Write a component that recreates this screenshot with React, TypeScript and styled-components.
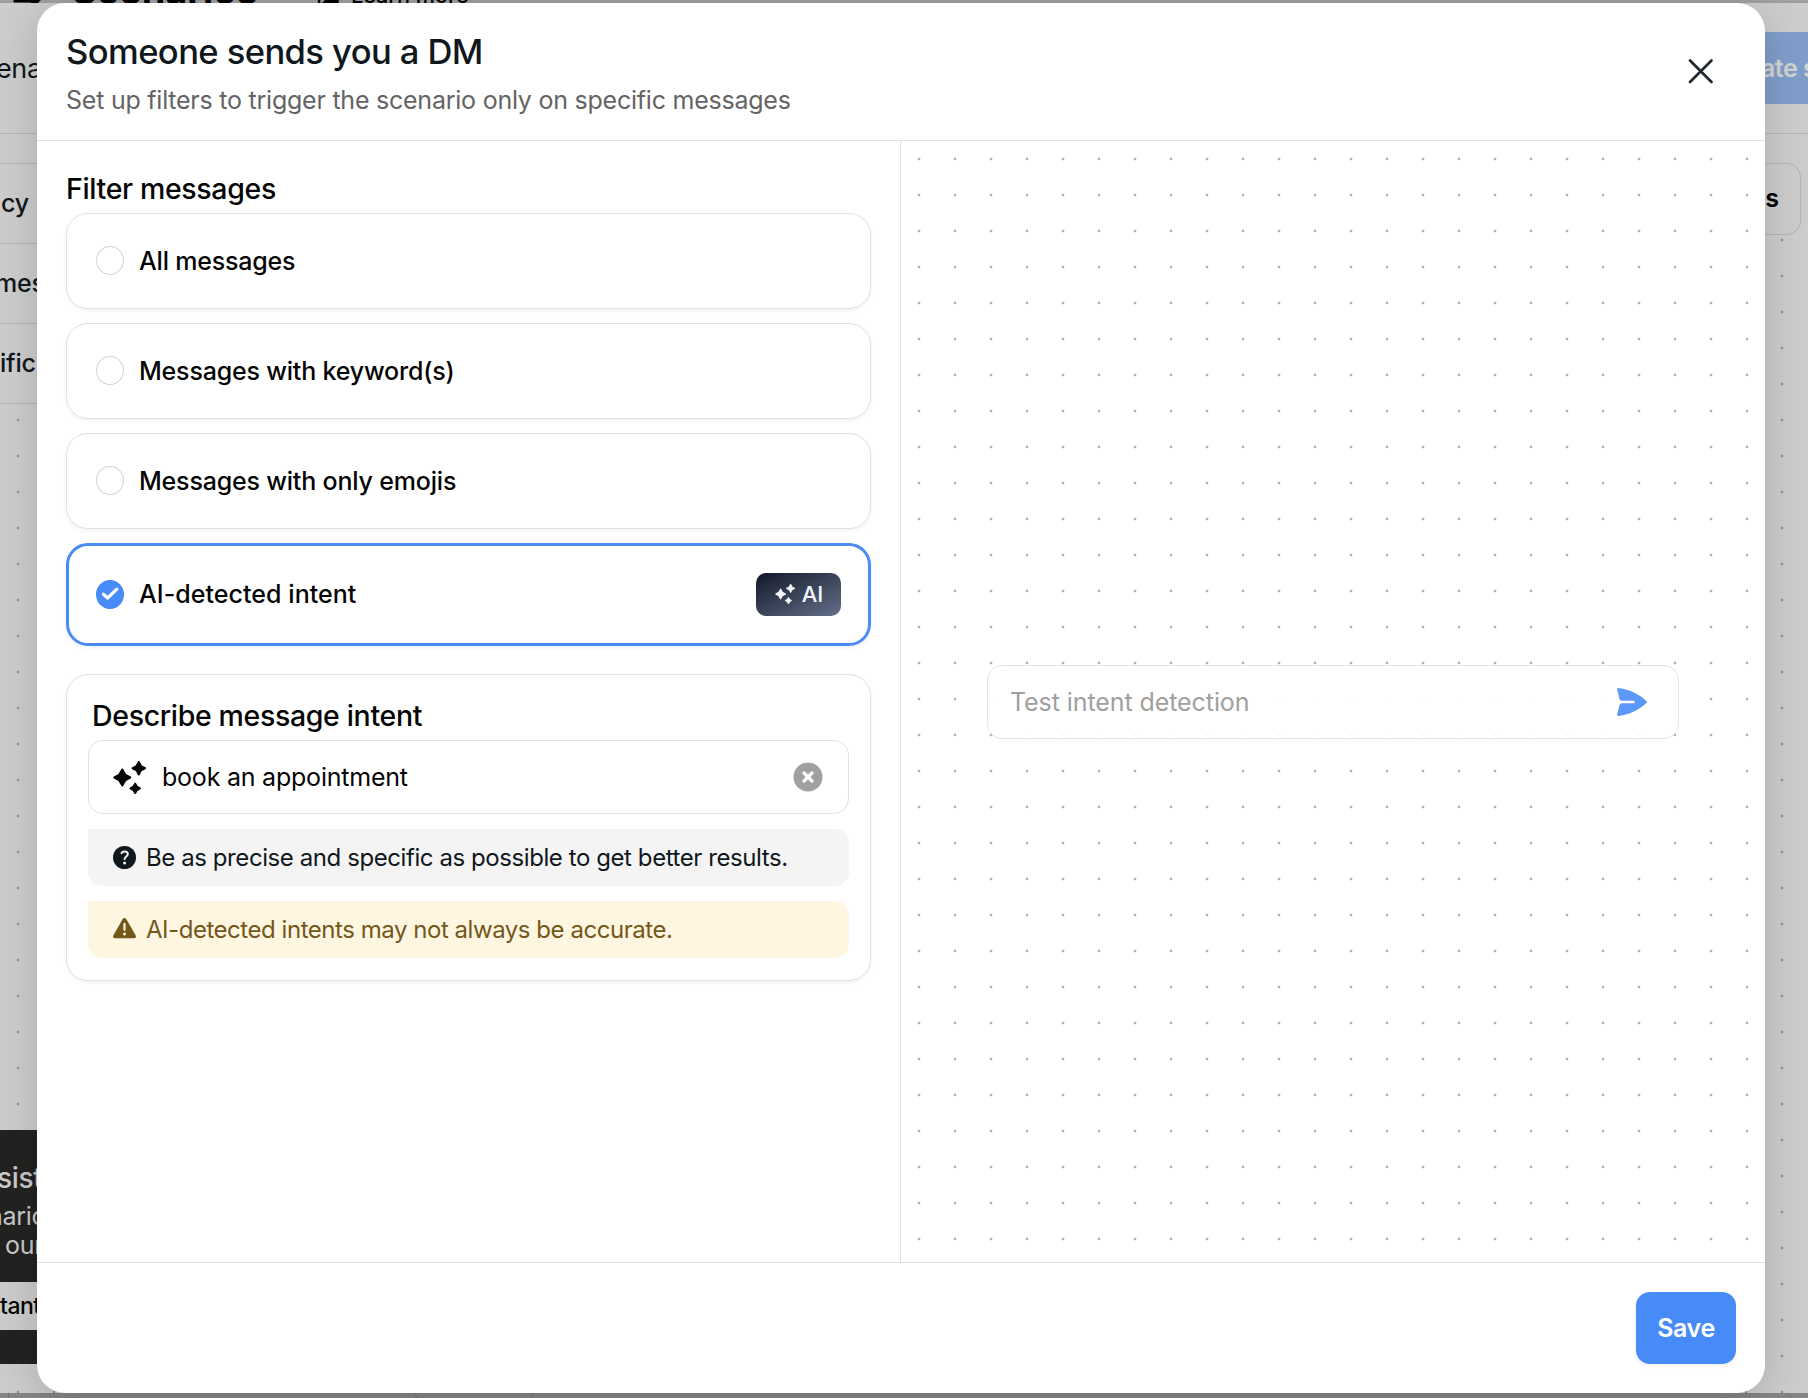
import React from "react";
import styled, { createGlobalStyle, css } from "styled-components";

const GlobalStyle = createGlobalStyle`
  *, *::before, *::after { box-sizing: border-box; }
  body { margin: 0; background: #cccccc; font-family: Inter, "Liberation Sans", sans-serif; overflow: hidden; }
  input, button { font: inherit; }
`;

const Screen = styled.div`
  position: relative;
  width: 1808px;
  height: 1398px;
  overflow: hidden;
  background: #cccccc;
  white-space: nowrap;
`;

const TopStrip = styled.div`
  position: relative;
  height: 3px;
  background: #9f9f9f;
  overflow: hidden;
`;

const StripText = styled.span<{ $x: number; $size: number; $weight: number; $bottom: number }>`
  position: absolute;
  left: ${(p) => p.$x}px;
  bottom: ${(p) => p.$bottom}px;
  font-size: ${(p) => p.$size}px;
  font-weight: ${(p) => p.$weight};
  line-height: 1;
  color: #000;
`;

const BackHeader = styled.div`
  height: 131px;
  border-bottom: 1px solid #b5b5b5;
  display: flex;
  justify-content: space-between;
  align-items: center;
`;

const BackTab = styled.span`
  margin-left: -4px;
  font-size: 27px;
  letter-spacing: -0.4px;
  color: #0f171c;
`;

const CreateButton = styled.div`
  width: 100px;
  height: 72px;
  background: #809dca;
  color: #d3d3d3;
  font-size: 25px;
  letter-spacing: -0.5px;
  font-weight: 600;
  line-height: 73px;
  padding-left: 53px;
  overflow: hidden;
`;

const BackCanvas = styled.div`
  position: relative;
  height: 1259px;
  background-image: radial-gradient(circle at center, #8f8f8f 0.8px, transparent 1.7px);
  background-size: 36px 36px;
  background-position: 0 16px;
  display: flex;
  justify-content: space-between;
  align-items: flex-start;
`;

const BackSide = styled.div`
  width: 60px;
  padding-top: 29px;
  overflow: hidden;
`;

const BackList = styled.div`
  border-top: 1px solid #b5b5b5;
  background: #cccccc;
`;

const BackRow = styled.div<{ $shift: number }>`
  height: 80px;
  line-height: 79px;
  border-bottom: 1px solid #b5b5b5;
  font-size: 25px;
  font-weight: 500;
  letter-spacing: -0.2px;
  color: #10181d;
  text-indent: ${(p) => p.$shift}px;
`;

const Assistant = styled.div`
  margin-top: 726px;
  height: 234px;
  padding-top: 29px;
  background: #222220;
  color: #c9c9c9;
`;

const AssistantLine = styled.div<{ $size: number; $height: number; $shift: number; $weight?: number }>`
  font-size: ${(p) => p.$size}px;
  font-weight: ${(p) => p.$weight ?? 400};
  height: ${(p) => p.$height}px;
  line-height: ${(p) => p.$height}px;
  text-indent: ${(p) => p.$shift}px;
  letter-spacing: -0.3px;
`;

const AssistantButton = styled.div`
  margin-top: 27px;
  height: 48px;
  line-height: 49px;
  background: #cbcbcb;
  color: #050505;
  font-size: 23px;
  font-weight: 500;
  letter-spacing: -0.5px;
`;

const BackPill = styled.div`
  margin-top: 29px;
  margin-right: 7px;
  width: 120px;
  height: 72px;
  border: 1px solid #b3b3b3;
  border-radius: 14px;
  background: #cccccc;
  color: #000;
  font-size: 25px;
  font-weight: 600;
  line-height: 69px;
  text-align: right;
  padding-right: 21px;
`;

const BottomStrip = styled.div`
  height: 5px;
  padding-left: 8px;
  display: flex;
  justify-content: space-between;
  background: #858585;
  overflow: hidden;
`;

const BottomEdge = styled.div`
  width: 1px;
  height: 5px;
  background: #707070;
`;

const BottomTab = styled.div<{ $width: number; $right?: number }>`
  flex: none;
  width: ${(p) => p.$width}px;
  height: 30px;
  margin-top: -18px;
  margin-right: ${(p) => p.$right ?? 0}px;
  border: 1px solid #747474;
  border-radius: 0 0 15px 15px;
`;

const Modal = styled.section`
  position: absolute;
  left: 37px;
  top: 3px;
  width: 1728px;
  height: 1390px;
  display: flex;
  flex-direction: column;
  background: #fff;
  border-radius: 28px;
  box-shadow: 0 8px 40px rgba(0, 0, 0, 0.16);
  overflow: hidden;
`;

const ModalHeader = styled.header`
  height: 138px;
  flex: none;
  display: flex;
  justify-content: space-between;
  padding: 29px 51px 0 29px;
  border-bottom: 1px solid #e1e1e1;
`;

const Title = styled.h1`
  margin: 0;
  font-size: 34.6px;
  line-height: 38px;
  font-weight: 500;
  letter-spacing: -0.6px;
  color: #10181d;
`;

const Subtitle = styled.p`
  margin: 15px 0 0;
  font-size: 25px;
  line-height: 30px;
  letter-spacing: -0.235px;
  color: #646464;
`;

const CloseButton = styled.button`
  width: 26px;
  height: 26px;
  margin-top: 26px;
  padding: 0;
  border: 0;
  background: none;
  svg { display: block; }
`;

const ModalBody = styled.div`
  flex: 1;
  min-height: 0;
  display: flex;
`;

const FormPane = styled.div`
  width: 864px;
  padding: 32px 29px 0;
  border-right: 1px solid #e1e1e1;
`;

const SectionTitle = styled.h2<{ $inset?: number }>`
  margin: 0 0 0 ${(p) => p.$inset ?? 0}px;
  height: 40px;
  font-size: 28.5px;
  line-height: 32px;
  font-weight: 500;
  letter-spacing: -0.34px;
  color: #050505;
`;

const Options = styled.div`
  display: flex;
  flex-direction: column;
  gap: 14px;
`;

const cardFrame = css`
  border: 1px solid #e1e1e1;
  border-radius: 22px;
  background: #fff;
  box-shadow: 0 2px 4px rgba(0, 0, 0, 0.05);
`;

const OptionCard = styled.label<{ $selected?: boolean }>`
  ${cardFrame}
  height: 96px;
  padding: 0 29px;
  display: flex;
  align-items: center;
  font-size: 25px;
  font-weight: 500;
  letter-spacing: -0.19px;
  color: #050505;
  ${(p) =>
    p.$selected &&
    css`
      height: 103px;
      padding: 0 27px 1px;
      border: 3px solid #4a8cf5;
      letter-spacing: 0.05px;
    `}
`;

const Radio = styled.span<{ $checked?: boolean }>`
  width: 28px;
  height: 29px;
  margin-right: 15px;
  margin-bottom: ${(p) => (p.$checked ? 0 : 1)}px;
  border-radius: 50%;
  border: 1px solid ${(p) => (p.$checked ? "#478bf8" : "#d3d3d3")};
  background: ${(p) => (p.$checked ? "#478bf8" : "#fff")};
  display: grid;
  place-items: center;
`;

const AiBadge = styled.span`
  margin-left: auto;
  width: 85px;
  height: 43px;
  padding-left: 1px;
  display: flex;
  align-items: center;
  justify-content: center;
  gap: 7px;
  border-radius: 10px;
  color: #f3f5fa;
  font-size: 22px;
  background: linear-gradient(to bottom right, #111827, #64708a);
`;

const IntentCard = styled.div`
  ${cardFrame}
  margin-top: 28px;
  height: 307px;
  padding: 25px 21px 0;
`;

const IntentInput = styled.div`
  height: 74px;
  display: flex;
  align-items: center;
  padding: 0 25px 0 24px;
  border: 1px solid #e1e1e1;
  border-radius: 15px;
  font-size: 25px;
  letter-spacing: -0.22px;
  color: #050505;
  svg { flex: none; }
`;

const IntentValue = styled.span`
  flex: 1;
  margin-left: 16px;
`;

const Note = styled.div<{ $warning?: boolean }>`
  margin-top: 15px;
  height: 57px;
  padding-left: 25px;
  display: flex;
  align-items: center;
  gap: 10px;
  border-radius: 0 14px 14px 14px;
  font-size: 24px;
  letter-spacing: ${(p) => (p.$warning ? -0.46 : -0.42)}px;
  color: ${(p) => (p.$warning ? "#735819" : "#10181d")};
  background: ${(p) => (p.$warning ? "#fff6e2" : "#f4f4f4")};
`;

const PreviewPane = styled.div`
  flex: 1;
  display: flex;
  align-items: center;
  justify-content: center;
  background-image: radial-gradient(circle at center, #b2b2b2 0.8px, transparent 1.8px);
  background-size: 36px 36px;
`;

const TestInput = styled.div`
  width: 692px;
  height: 74px;
  padding: 0 30px 0 22px;
  display: flex;
  align-items: center;
  justify-content: space-between;
  border: 1px solid #e4e4e4;
  border-radius: 15px;
  background: rgba(255, 255, 255, 0.9);
  color: #a0a0a0;
  font-size: 25px;
  letter-spacing: -0.08px;
`;

const ModalFooter = styled.footer`
  height: 131px;
  flex: none;
  display: flex;
  align-items: flex-start;
  justify-content: flex-end;
  padding: 29px 29px 0 0;
  border-top: 1px solid #e1e1e1;
`;

const SaveButton = styled.button`
  width: 100px;
  height: 72px;
  padding: 0;
  border: 0;
  border-radius: 14px;
  background: #478bf8;
  color: #fff;
  font-size: 25px;
  font-weight: 600;
  letter-spacing: -0.4px;
  box-shadow: 0 2px 4px rgba(0, 0, 0, 0.06);
`;

function Sparkles({ size }: { size: number }) {
  return (
    <svg width={size} height={size} viewBox="0 0 32 32" fill="currentColor" stroke="currentColor" strokeWidth="2" strokeLinejoin="round">
      <path d="M9 8.3L11.8 13.2L16.7 16L11.8 18.8L9 23.7L6.2 18.8L1.3 16L6.2 13.2Z" />
      <path d="M25 1L27.1 4.9L31 7L27.1 9.1L25 13L22.9 9.1L19 7L22.9 4.9Z" />
      <path d="M21.5 22L23.2 24.8L26 26.5L23.2 28.2L21.5 31L19.8 28.2L17 26.5L19.8 24.8Z" />
    </svg>
  );
}

function CloseIcon() {
  return (
    <svg width="26" height="26" viewBox="0 0 26 26" fill="none" stroke="#1f2733" strokeWidth="2.7" strokeLinecap="round">
      <path d="M2 2.5L23.5 24M23.5 2.5L2 24" />
    </svg>
  );
}

function CheckIcon() {
  return (
    <svg width="18" height="14" viewBox="0 0 18 14" fill="none" stroke="#fff" strokeWidth="3.2" strokeLinecap="round" strokeLinejoin="round">
      <path d="M2.5 7.3L6.6 11L15.8 2.2" />
    </svg>
  );
}

function ClearIcon() {
  return (
    <svg width="30" height="30" viewBox="0 0 30 30">
      <circle cx="15" cy="15" r="14.5" fill="#a0a0a0" />
      <path d="M11 11L19 19M19 11L11 19" stroke="#fff" strokeWidth="3.2" strokeLinecap="round" />
    </svg>
  );
}

function QuestionIcon() {
  return (
    <svg width="23" height="23" viewBox="0 0 23 23">
      <circle cx="11.5" cy="11.5" r="11.5" fill="#10181d" />
      <path d="M8.5 7.2C9.4 5 14.8 4.7 14.8 8.1C14.8 10.6 11.6 10.3 11.6 13.1" fill="none" stroke="#f4f4f4" strokeWidth="2" strokeLinecap="round" />
      <circle cx="11.6" cy="17" r="1.5" fill="#f4f4f4" />
    </svg>
  );
}

function WarningIcon() {
  return (
    <svg width="23" height="25" viewBox="0 0 23 25">
      <path d="M9.6 2.2Q11.5 -.8 13.4 2.2L22.6 18.2Q23.8 21.2 20.8 21.2H2.2Q-.8 21.2 .4 18.2Z" fill="#735819" />
      <path d="M11.5 6.8V12.8" stroke="#fff6e2" strokeWidth="2.2" strokeLinecap="round" />
      <circle cx="11.5" cy="17" r="1.5" fill="#fff6e2" />
    </svg>
  );
}

function SendIcon() {
  return (
    <svg width="31" height="28" viewBox="0 0 31 28">
      <path d="M1.5 0C13 1.5 23 6.5 30.3 14C23 21.5 13 26.5 1.5 28Q0 28 .1 26.8L2.5 17Q3 15.2 5 15.2H16.5Q17.7 15.2 17.7 14Q17.7 12.8 16.5 12.8H5Q3 12.8 2.5 11L.1 1.2Q0 0 1.5 0Z" fill="#5c98f9" />
    </svg>
  );
}

const options = ["All messages", "Messages with keyword(s)", "Messages with only emojis"];

export default function App() {
  return (
    <Screen>
      <GlobalStyle />
      <TopStrip>
        <StripText $x={12} $size={36} $weight={700} $bottom={-13}>➔</StripText>
        <StripText $x={72} $size={37.9} $weight={700} $bottom={-7}>Scenarios</StripText>
        <StripText $x={316} $size={26} $weight={700} $bottom={-5}>◪</StripText>
        <StripText $x={351} $size={21.6} $weight={500} $bottom={-4}>Learn more</StripText>
      </TopStrip>
      <BackHeader>
        <BackTab>ena</BackTab>
        <CreateButton>ate s</CreateButton>
      </BackHeader>
      <BackCanvas>
        <BackSide>
          <BackList>
            <BackRow $shift={1}>cy</BackRow>
            <BackRow $shift={-5}>mes</BackRow>
            <BackRow $shift={0}>ific</BackRow>
          </BackList>
          <Assistant>
            <AssistantLine $size={28} $height={38} $shift={-3} $weight={500}>sist</AssistantLine>
            <AssistantLine $size={25} $height={38} $shift={-12}>nario</AssistantLine>
            <AssistantLine $size={25} $height={20} $shift={5}>our</AssistantLine>
            <AssistantButton>tant</AssistantButton>
          </Assistant>
        </BackSide>
        <BackPill>s</BackPill>
      </BackCanvas>
      <BottomStrip>
        <BottomEdge />
        <BottomTab $width={120} $right={849} />
        <BottomTab $width={400} $right={-380} />
      </BottomStrip>
      <Modal>
        <ModalHeader>
          <div>
            <Title>Someone sends you a DM</Title>
            <Subtitle>Set up filters to trigger the scenario only on specific messages</Subtitle>
          </div>
          <CloseButton aria-label="Close"><CloseIcon /></CloseButton>
        </ModalHeader>
        <ModalBody>
          <FormPane>
            <SectionTitle>Filter messages</SectionTitle>
            <Options>
              {options.map((label) => (
                <OptionCard key={label}>
                  <Radio />
                  {label}
                </OptionCard>
              ))}
              <OptionCard $selected>
                <Radio $checked><CheckIcon /></Radio>
                AI-detected intent
                <AiBadge><Sparkles size={20} />AI</AiBadge>
              </OptionCard>
            </Options>
            <IntentCard>
              <SectionTitle $inset={4}>Describe message intent</SectionTitle>
              <IntentInput>
                <Sparkles size={33} />
                <IntentValue>book an appointment</IntentValue>
                <ClearIcon />
              </IntentInput>
              <Note><QuestionIcon />Be as precise and specific as possible to get better results.</Note>
              <Note $warning><WarningIcon />AI-detected intents may not always be accurate.</Note>
            </IntentCard>
          </FormPane>
          <PreviewPane>
            <TestInput>Test intent detection<SendIcon /></TestInput>
          </PreviewPane>
        </ModalBody>
        <ModalFooter><SaveButton>Save</SaveButton></ModalFooter>
      </Modal>
    </Screen>
  );
}
